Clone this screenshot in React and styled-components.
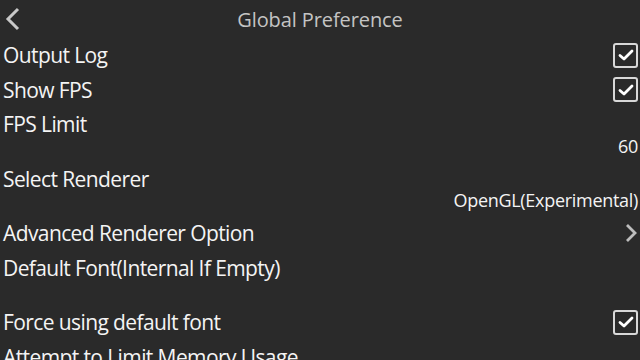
import React from 'react';
import styled, { createGlobalStyle } from 'styled-components';

const Global = createGlobalStyle`
  html, body {
    margin: 0;
    padding: 0;
    background: #2a2a2a;
  }
  body {
    font-family: "Open Sans", "Noto Sans", sans-serif;
    overflow: hidden;
  }
`;

const Screen = styled.div`
  width: 640px;
  height: 360px;
  overflow: hidden;
  background: #2a2a2a;
  color: #f2f2f2;
`;

const Header = styled.div`
  position: relative;
  height: 38px;
  display: flex;
  align-items: center;
  justify-content: center;
`;

const BackButton = styled.div`
  position: absolute;
  left: 4px;
  top: 7px;
  width: 18px;
  height: 24px;
`;

const Title = styled.div`
  font-size: 20px;
  color: #c4c4c4;
  letter-spacing: -0.1px;
`;

const List = styled.div`
  display: flex;
  flex-direction: column;
`;

const Row = styled.div`
  display: flex;
  flex-direction: column;
  padding: 0 2px 0 3px;
  padding-bottom: ${(p) => (p.$tall ? '6px' : '0')};
`;

const LabelLine = styled.div`
  height: 34.5px;
  display: flex;
  align-items: center;
  justify-content: space-between;
`;

const Label = styled.span`
  font-size: 21px;
  letter-spacing: -0.6px;
  color: #f4f4f4;
  white-space: nowrap;
`;

const Value = styled.div`
  height: 20px;
  line-height: 20px;
  margin-top: -6px;
  text-align: right;
  font-size: 18px;
  letter-spacing: -0.3px;
  color: #f4f4f4;
`;

const Box = styled.div`
  width: 21px;
  height: 21px;
  border: 2px solid #d8d8d8;
  border-radius: 3px;
  background: #2a2a2a;
  display: flex;
  align-items: center;
  justify-content: center;
`;

const Check = () => (
  <Box>
    <svg width="16" height="14" viewBox="0 0 16 14">
      <path d="M2 7.5 L6 11 L14 3" fill="none" stroke="#ffffff" strokeWidth="2.8" strokeLinecap="round" strokeLinejoin="round" />
    </svg>
  </Box>
);

const Arrow = () => (
  <svg width="14" height="22" viewBox="0 0 14 22">
    <path d="M3 3 L11 11 L3 19" fill="none" stroke="#bdbdbd" strokeWidth="2.8" strokeLinejoin="miter" />
  </svg>
);

const items = [
  { label: 'Output Log', check: true },
  { label: 'Show FPS', check: true },
  { label: 'FPS Limit', value: '60' },
  { label: 'Select Renderer', value: 'OpenGL(Experimental)' },
  { label: 'Advanced Renderer Option', arrow: true },
  { label: 'Default Font(Internal If Empty)', value: '' },
  { label: 'Force using default font', check: true },
  { label: 'Attempt to Limit Memory Usage' },
];

export default function App() {
  return (
    <Screen>
      <Global />
      <Header>
        <BackButton>
          <svg width="18" height="24" viewBox="0 0 18 24">
            <path d="M14 2 L4 12 L14 22" fill="none" stroke="#c8c8c8" strokeWidth="3" />
          </svg>
        </BackButton>
        <Title>Global Preference</Title>
      </Header>
      <List>
        {items.map((it) => (
          <Row key={it.label} $tall={it.value !== undefined}>
            <LabelLine>
              <Label>{it.label}</Label>
              {it.check && <Check />}
              {it.arrow && <Arrow />}
            </LabelLine>
            {it.value !== undefined && <Value>{it.value || '\u00a0'}</Value>}
          </Row>
        ))}
      </List>
    </Screen>
  );
}
